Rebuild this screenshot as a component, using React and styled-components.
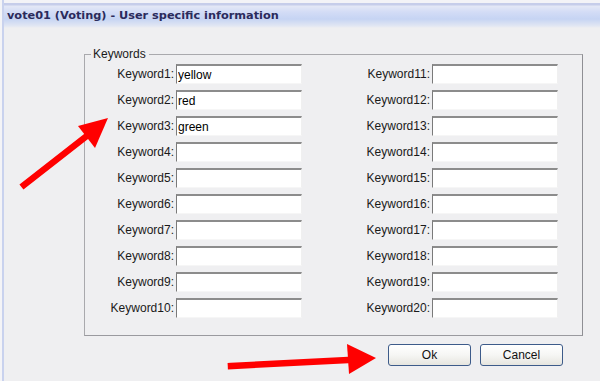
import styled, { createGlobalStyle } from 'styled-components';

const GlobalStyle = createGlobalStyle`
  html, body {
    margin: 0;
    padding: 0;
    background: #f4f4f7;
    overflow: hidden;
  }
`;

const Window = styled.div`
  position: relative;
  box-sizing: border-box;
  width: 598px;
  height: 381px;
  margin-left: 2px;
  border-left: 2px solid #c9d2ee;
  background: #efeff1;
  display: flex;
  flex-direction: column;
  font-family: "Liberation Sans", Arial, sans-serif;
`;

const TitleBar = styled.div`
  height: 28px;
  box-sizing: border-box;
  padding: 9px 0 0 3px;
  background: linear-gradient(
    to bottom,
    #f3f3f7 0,
    #f3f3f7 3px,
    #c6cdea 3px,
    #c6cdea 5px,
    #e4e8f6 6px,
    #d3dcf6 12px,
    #c6d4f3 19px,
    #e2e7f3 26px,
    #efeff1 28px
  );
  font-family: "DejaVu Sans", Verdana, sans-serif;
  font-weight: bold;
  font-size: 11.3px;
  line-height: 14px;
  color: #2b2b5c;
  white-space: nowrap;
`;

const Group = styled.div`
  position: relative;
  box-sizing: border-box;
  width: 499px;
  margin: 26px 0 0 80px;
  padding: 9px 0 17px 0;
  border: 1px solid #a9a9ad;
  border-right-color: #8f8f94;
  border-bottom-color: #9a9a9f;
`;

const Legend = styled.span`
  position: absolute;
  top: -8px;
  left: 6px;
  padding: 0 3px 0 2px;
  background: #efeff1;
  font-size: 12px;
  line-height: 14px;
  color: #1a1a1a;
`;

const FieldGrid = styled.div`
  display: grid;
  grid-template-columns: 89px 126px 126px 126px;
  grid-auto-rows: 20px;
  column-gap: 2px;
  row-gap: 6px;
`;

const Label = styled.label`
  display: flex;
  align-items: center;
  justify-content: flex-end;
  font-size: 12px;
  color: #1a1a1a;
  white-space: nowrap;
`;

const TextBox = styled.input`
  box-sizing: border-box;
  width: 126px;
  height: 20px;
  margin: 0;
  padding: 1px 0 0 1px;
  border-style: solid;
  border-width: 2px 1px 1px 1px;
  border-color: #8c8c8c #f0f0f0 #f6f6f6 #7a7a7a;
  background: #fff;
  font-family: "Liberation Sans", Arial, sans-serif;
  font-size: 12px;
  color: #000;
  outline: none;
`;

const ButtonRow = styled.div`
  display: flex;
  justify-content: flex-end;
  gap: 9px;
  margin-top: 8px;
  padding-right: 37px;
`;

const Button = styled.button`
  box-sizing: border-box;
  width: 83px;
  height: 22px;
  padding: 0;
  border: 1px solid #3d5b8a;
  border-radius: 3px;
  background: linear-gradient(to bottom, #ffffff 0%, #f6f6f4 50%, #e6e5df 100%);
  font-family: "Liberation Sans", Arial, sans-serif;
  font-size: 12px;
  color: #111;
`;

const Overlay = styled.svg`
  position: absolute;
  left: -4px;
  top: 0;
  pointer-events: none;
`;

const keywords = {
  1: 'yellow',
  2: 'red',
  3: 'green',
};

function Field({ n }) {
  return (
    <>
      <Label htmlFor={`kw${n}`}>Keyword{n}:</Label>
      <TextBox id={`kw${n}`} readOnly value={keywords[n] || ''} />
    </>
  );
}

function Row({ n }) {
  return (
    <>
      <Field n={n} />
      <Field n={n + 10} />
    </>
  );
}

function Arrows() {
  return (
    <Overlay width="600" height="381" viewBox="0 0 600 381">
      <g fill="#ff0000" stroke="none">
        <line x1="24" y1="185" x2="88" y2="135" stroke="#ff0000" strokeWidth="6.5" strokeLinecap="square" />
        <polygon points="108,118 78,126 95,148" />
        <line x1="231" y1="366" x2="350" y2="360" stroke="#ff0000" strokeWidth="6.5" strokeLinecap="square" />
        <polygon points="376,358 347,344 349,374" />
      </g>
    </Overlay>
  );
}

export default function App() {
  const rows = Array.from({ length: 10 }, (_, i) => i + 1);
  return (
    <>
      <GlobalStyle />
      <Window>
        <TitleBar>vote01 (Voting) - User specific information</TitleBar>
        <Group>
          <Legend>Keywords</Legend>
          <FieldGrid>
            {rows.map((n) => (
              <Row key={n} n={n} />
            ))}
          </FieldGrid>
        </Group>
        <ButtonRow>
          <Button>Ok</Button>
          <Button>Cancel</Button>
        </ButtonRow>
        <Arrows />
      </Window>
    </>
  );
}
